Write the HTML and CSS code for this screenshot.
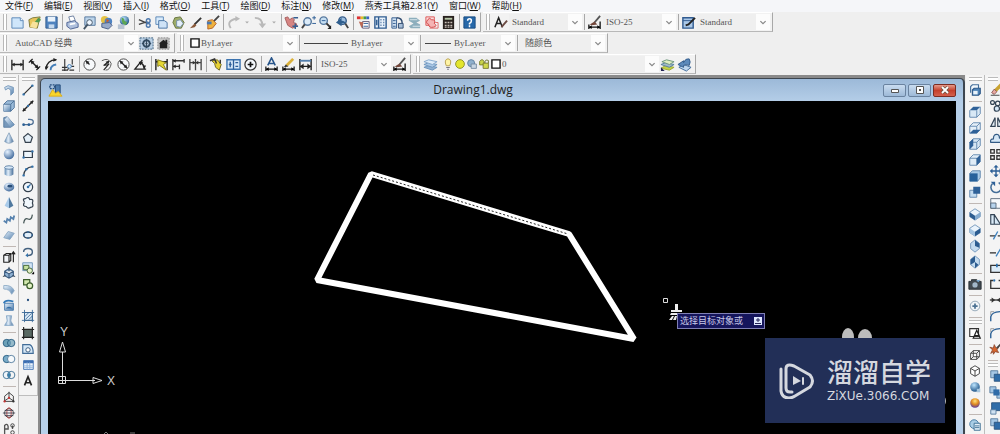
FILE: index.html
```html
<!DOCTYPE html>
<html lang="zh-CN">
<head>
<meta charset="utf-8">
<title>Drawing1.dwg</title>
<link rel="stylesheet" href="styles.css">
</head>
<body>
<svg class="sprite" aria-hidden="true">
<defs>
<linearGradient id="gb" x1="0" y1="0" x2="1" y2="1"><stop offset="0" stop-color="#e8f3fd"/><stop offset="1" stop-color="#5681ad"/></linearGradient>
<linearGradient id="gh" x1="0" y1="0" x2="1" y2="0"><stop offset="0" stop-color="#5f8ab5"/><stop offset=".4" stop-color="#e3effa"/><stop offset="1" stop-color="#49709a"/></linearGradient>
<radialGradient id="gs" cx=".35" cy=".3" r=".75"><stop offset="0" stop-color="#e6f2ff"/><stop offset="1" stop-color="#416a9c"/></radialGradient>
<radialGradient id="gg" cx=".4" cy=".3" r=".7"><stop offset="0" stop-color="#bfe6ff"/><stop offset="1" stop-color="#1d5488"/></radialGradient>
<radialGradient id="go" cx=".5" cy=".3" r=".7"><stop offset="0" stop-color="#ffe27a"/><stop offset=".5" stop-color="#e08a20"/><stop offset="1" stop-color="#5a3aa0"/></radialGradient>
</defs>
<symbol id="new" viewBox="0 0 16 16"><path d="M2 3h9l3 3v8H2z" fill="#cfe6fb" stroke="#5b87b8"/><path d="M11 3v3h3" fill="#fff" stroke="#5b87b8"/></symbol>
<symbol id="open" viewBox="0 0 16 16"><path d="M2 5l4-2 8-1-3 12-8-1z" fill="#e8c55a" stroke="#7d7a3c"/><path d="M7 9l5-6 3 2-5 6z" fill="#4e9a4e"/><path d="M3 13l3-6 6 1-2 6z" fill="#f8e39b"/></symbol>
<symbol id="save" viewBox="0 0 16 16"><path d="M2 2h12v12H2z" fill="#4f83bf" stroke="#315b8e"/><path d="M4 2h8v5H4z" fill="#e9f2fb"/><path d="M5 10h6v4H5z" fill="#c5d9ee"/></symbol>
<symbol id="print" viewBox="0 0 16 16"><path d="M4 2l5-1 2 5-5 2z" fill="#fff" stroke="#6c7fa0"/><path d="M2 8l8-2 4 3v4l-8 2-4-3z" fill="#aebfdc" stroke="#4d6394"/><path d="M5 10l6-1" stroke="#fff" stroke-width="2"/></symbol>
<symbol id="preview" viewBox="0 0 16 16"><path d="M3 2h11v9H3z" fill="#bcd4ea" stroke="#55779f"/><circle cx="8" cy="8" r="3" fill="#eef6ff" stroke="#456"/><path d="M6 10l-4 5" stroke="#456" stroke-width="2"/></symbol>
<symbol id="publish" viewBox="0 0 16 16"><circle cx="6" cy="5" r="4" fill="#e5c243"/><circle cx="10" cy="7" r="4" fill="#4e83c2"/><path d="M3 9l8-1 3 3-4 4-7-2z" fill="#96a9c9" stroke="#4b5f88"/><path d="M8 4l3 2-3 2z" fill="#d05a2a"/></symbol>
<symbol id="globe" viewBox="0 0 16 16"><circle cx="9" cy="6" r="5" fill="url(#gg)"/><path d="M6 3q3 0 3 3l3 2-2 3q-4 0-4-8" fill="#5ca653"/><path d="M2 10h7v5H2z" fill="#b7c3d2"/></symbol>
<symbol id="cut" viewBox="0 0 16 16"><path d="M2 5l9 4M2 10l9-3" stroke="#444" stroke-width="1.5"/><circle cx="12" cy="6" r="2" fill="none" stroke="#4d78ad" stroke-width="1.5"/><circle cx="12" cy="11" r="2" fill="none" stroke="#4d78ad" stroke-width="1.5"/></symbol>
<symbol id="copy" viewBox="0 0 16 16"><path d="M2 2h8v8H2z" fill="#d9ebfb" stroke="#5b87b8"/><path d="M5 6h6l3 2v6H5z" fill="#cfe3f7" stroke="#4a74a3"/></symbol>
<symbol id="paste" viewBox="0 0 16 16"><path d="M4 3l6-1 4 6-3 6-6 0-3-6z" fill="#9dac68" stroke="#66743e"/><path d="M6 6l4-1 3 4-3 4-4-1z" fill="#e4effa" stroke="#7790a8"/></symbol>
<symbol id="brush" viewBox="0 0 16 16"><path d="M14 3l-7 7" stroke="#333" stroke-width="2"/><path d="M7 9l-5 5 5-1 2-2z" fill="#8b5a3a"/></symbol>
<symbol id="match" viewBox="0 0 16 16"><path d="M15 1l-6 6" stroke="#444" stroke-width="2"/><path d="M3 6l5-1 4 4-4 5-5 1z" fill="#eeb13c" stroke="#b5622a"/><path d="M2 7h5v3H2z" fill="#4b78b0"/></symbol>
<symbol id="undo" viewBox="0 0 16 16"><path d="M5 14Q0 6 11 4" fill="none" stroke="#b9b9b9" stroke-width="2"/><path d="M10 1l5 3-5 3z" fill="#b9b9b9"/></symbol>
<symbol id="redo" viewBox="0 0 16 16"><path d="M2 3q8 0 8 8" fill="none" stroke="#b9b9b9" stroke-width="2"/><path d="M6 9h8l-4 5z" fill="#b9b9b9"/></symbol>
<symbol id="dd" viewBox="0 0 8 16"><path d="M2 7h4l-2 2z" fill="#aaa"/></symbol>
<symbol id="pan" viewBox="0 0 16 16"><path d="M1 3l3-1 2 3 3-2 2 2-1 3 3 1 1 3-5 2-5-3z" fill="#d68482" stroke="#a45e5e"/><path d="M9 12h6M12 9v6M10 3h5" stroke="#365f91" stroke-width="1.5"/></symbol>
<symbol id="zoomi" viewBox="0 0 16 16"><circle cx="7" cy="7" r="4" fill="#dcebf8" stroke="#57799f" stroke-width="1.5"/><path d="M4 10l-3 4" stroke="#444" stroke-width="2"/><path d="M12 3h4M14 1v4M12 9h4" stroke="#2d5e95"/></symbol>
<symbol id="zoomw" viewBox="0 0 16 16"><circle cx="6" cy="6" r="4" fill="#c7dff2" stroke="#57799f" stroke-width="1.5"/><path d="M9 9l4 4" stroke="#333" stroke-width="2"/><path d="M4 6h4" stroke="#2d5e95"/><path d="M14 11v4h-4z" fill="#222"/></symbol>
<symbol id="zoomp" viewBox="0 0 16 16"><circle cx="8" cy="6" r="4" fill="#9ebfdf" stroke="#345b89" stroke-width="1.5"/><path d="M11 9l3 5" stroke="#444" stroke-width="2"/><path d="M1 8l6-5v3q4 0 4 3-2-1-4 0v3z" fill="#31608f"/></symbol>
<symbol id="props" viewBox="0 0 16 16"><path d="M1 3h4" stroke="#d33" stroke-width="3"/><path d="M5 3h3" stroke="#e4bc27" stroke-width="3"/><path d="M8 3h3" stroke="#429b46" stroke-width="3"/><path d="M11 3h3" stroke="#3965c2" stroke-width="3"/><path d="M7 7h7v7H7z" fill="#fff" stroke="#635b78"/><path d="M8 9h5M8 12h5" stroke="#31629b"/><path d="M3 7l5 1-2 6z" fill="#bc6955"/></symbol>
<symbol id="dcenter" viewBox="0 0 16 16"><path d="M2 2h12v12H2z" fill="#e9f2fb" stroke="#2f5c91" stroke-width="1.5"/><path d="M6 2v12M4 5v6M8 5h1m2 0h1M8 8h1m2 0h1M8 11h1m2 0h1" stroke="#2f5c91" stroke-width="1.5"/></symbol>
<symbol id="tpal" viewBox="0 0 16 16"><path d="M2 3h5v11H2z" fill="#cfe0f1" stroke="#345c8e"/><path d="M3 6h3M3 9h3M3 12h3" stroke="#345c8e"/><path d="M7 3q6 0 6 6" fill="none" stroke="#304b70" stroke-width="1.5"/><path d="M9 9h5v5H9z" fill="#a6bdd7" stroke="#304b70"/></symbol>
<symbol id="sheet" viewBox="0 0 16 16"><path d="M2 3h8l4 3-4 2 4 2v4H4l-2-2 5-3-5-3z" fill="#8caebd"/><path d="M3 5h8M6 12h8" stroke="#d7e5ec"/></symbol>
<symbol id="markup" viewBox="0 0 16 16"><path d="M2 2h9v9H2z" fill="#fbdede" stroke="#d55"/><path d="M4 5q2-3 4 0 5 0 3 4 4 3-1 4-5 1-5-3-4-1-1-5" fill="#f5b3b3" stroke="#cf4444"/><path d="M12 8h3v6H6" fill="none" stroke="#d66"/></symbol>
<symbol id="calc" viewBox="0 0 16 16"><path d="M2 1h12v14H2z" fill="#29221f"/><path d="M4 3h8v2H4z" fill="#b6c6a7"/><path d="M4 8h2m1 0h2m1 0h2M4 11h2m1 0h2m1 0h2M4 13h2m1 0h2m1 0h2" stroke="#c9bfb8" stroke-width="1.4"/></symbol>
<symbol id="help" viewBox="0 0 16 16"><path d="M2 2h12v12H2z" fill="#2668a9" stroke="#174b81"/><path d="M6 6q0-2 2-2t2 2-2 3v1m0 1v2" fill="none" stroke="#fff" stroke-width="1.6"/></symbol>
<symbol id="tstyle" viewBox="0 0 16 16"><path d="M2 13L6 3l4 10M3 9h5" fill="none" stroke="#222" stroke-width="1.6"/><path d="M15 6l-6 7" stroke="#6b4a42" stroke-width="2"/></symbol>
<symbol id="dstyle" viewBox="0 0 16 16"><path d="M14 1L8 8" stroke="#555" stroke-width="2"/><path d="M3 10l5-3 3 3-6 1z" fill="#73473b"/><path d="M2 10v5M14 7v8M2 13h12" stroke="#111" stroke-width="1.4"/><path d="M2 13l3-2v4zM14 13l-3-2v4z"/></symbol>
<symbol id="tbstyle" viewBox="0 0 16 16"><path d="M2 3h11v11H2z" fill="#aac8e8" stroke="#315b90" stroke-width="1.5"/><path d="M2 6h11" stroke="#315b90"/><path d="M15 3l-7 7-3 1" stroke="#222" stroke-width="2" fill="none"/></symbol>
<symbol id="gear" viewBox="0 0 16 16"><path d="M1 2h14v12H1z" fill="#bad0e5" stroke="#3d607f" stroke-dasharray="2 1"/><circle cx="8" cy="8" r="3.5" fill="none" stroke="#30495f" stroke-width="2"/><circle cx="8" cy="8" r="1"/><path d="M8 3v10M3 8h2m6 0h2" stroke="#30495f"/></symbol>
<symbol id="ws" viewBox="0 0 16 16"><path d="M2 2h12v12H2z" fill="#c6c6c6" stroke="#888" stroke-dasharray="2 1"/><path d="M3 8l5-4 5 4h-1v5H4V8z" fill="#222"/><path d="M11 4v4" stroke="#222" stroke-width="2"/></symbol>
<symbol id="dlin" viewBox="0 0 16 16"><path d="M2 3v11M14 3v11M2 8h12" stroke="#222" stroke-width="1.4"/><path d="M2 8l3-2v4zM14 8l-3-2v4z" fill="#222"/></symbol>
<symbol id="dalg" viewBox="0 0 16 16"><path d="M2 6l4-4M10 14l4-4M4 4l8 8" stroke="#222" stroke-width="1.5"/><path d="M3 3l5 2-3 3zM13 13l-5-2 3-3z" fill="#222"/></symbol>
<symbol id="darc" viewBox="0 0 16 16"><path d="M2 13Q3 3 13 3" fill="none" stroke="#222" stroke-width="1.4"/><path d="M7 14q0-5 6-6" fill="none" stroke="#467fb8" stroke-width="2"/><path d="M14 3l-4-2v4zM2 14l-1-4h4z" fill="#222"/></symbol>
<symbol id="dord" viewBox="0 0 16 16"><path d="M4 2v9M1 11h6M4 11v4M12 2v6M1 14h6l2-4h5M9 14h5" fill="none" stroke="#333" stroke-width="1.200"/><circle cx="9" cy="10" r="2" fill="#dceaf7" stroke="#467fb8"/></symbol>
<symbol id="drad" viewBox="0 0 16 16"><circle cx="8" cy="8" r="6" fill="#f7f9fb" stroke="#444"/><path d="M8 8L4 4" stroke="#222" stroke-width="1.3"/><path d="M4 4l4 1-3 3z" fill="#222"/></symbol>
<symbol id="djog" viewBox="0 0 16 16"><path d="M3 4q7-4 10 3-1 7-6 7" fill="none" stroke="#555"/><path d="M10 5L5 9l5-1-5 6" fill="none" stroke="#222" stroke-width="1.200"/><path d="M11 4l-4 1 3 3z" fill="#222"/></symbol>
<symbol id="ddia" viewBox="0 0 16 16"><circle cx="8" cy="8" r="6" fill="#f7f9fb" stroke="#444"/><path d="M4 4l8 8" stroke="#222" stroke-width="1.3"/><path d="M4 4l4 1-3 3zM12 12l-4-1 3-3z" fill="#222"/></symbol>
<symbol id="dang" viewBox="0 0 16 16"><path d="M14 13H2l8-10M7 6q5 1 5 7" fill="none" stroke="#222" stroke-width="1.4"/><path d="M6 5l5 0-3 4zM12 13l-2-4h4z" fill="#222"/></symbol>
<symbol id="dquick" viewBox="0 0 16 16"><path d="M2 2v12M14 2v12M2 5h12" stroke="#222" stroke-width="1.5"/><path d="M4 3l9 3-3 2 3 6-7-5-2 1z" fill="#e6d833" stroke="#817a1d"/></symbol>
<symbol id="dbase" viewBox="0 0 16 16"><path d="M2 2v12M14 2v4M9 8v5M2 4h12M2 10h7" stroke="#333" stroke-width="1.4"/><path d="M2 4l3-2v4zM2 10l3-2v4z" fill="#222"/></symbol>
<symbol id="dcont" viewBox="0 0 16 16"><path d="M2 2v12M8 2v12M14 2v12M2 6h12" stroke="#444" stroke-width="1.4"/><path d="M8 6l-3-2v4zM8 6l3-2v4z" fill="#333"/></symbol>
<symbol id="dspace" viewBox="0 0 16 16"><path d="M3 4l6-1 4 5-2 6-4-3-1-4z" fill="#e6d033" stroke="#6d6520"/><path d="M1 4l5-2 2 5M12 3v4" fill="none" stroke="#333" stroke-width="1.5"/></symbol>
<symbol id="tol" viewBox="0 0 16 16"><path d="M1 3h14v10H1z" fill="#d8e9f9" stroke="#3d74b0" stroke-width="1.5"/><path d="M8 3v10M3 8h3M4.500 5v6M10 6h3M10 10h3" stroke="#2d5e99" stroke-width="1.4"/></symbol>
<symbol id="cmark" viewBox="0 0 16 16"><circle cx="8" cy="8" r="6" fill="#f4f8fc" stroke="#333" stroke-width="1.3"/><path d="M5 8h6M8 5v6" stroke="#111" stroke-width="1.8"/></symbol>
<symbol id="dedit" viewBox="0 0 16 16"><path d="M4 9l4-8 4 8M5 7h6" fill="none" stroke="#28558a" stroke-width="1.7"/><path d="M2 10v5M14 10v5M2 13h12" stroke="#111" stroke-width="1.3"/><path d="M2 13l3-2v4zM14 13l-3-2v4z"/></symbol>
<symbol id="dtedit" viewBox="0 0 16 16"><path d="M13 2L6 9" stroke="#dbb13b" stroke-width="3"/><path d="M3 11l2-3 3 2z" fill="#333"/><path d="M2 10v5M14 10v5M2 13h12" stroke="#111" stroke-width="1.3"/><path d="M2 13l3-2v4zM14 13l-3-2v4z"/></symbol>
<symbol id="dupd" viewBox="0 0 16 16"><path d="M2 2v12M14 2v12M2 10h12" stroke="#222" stroke-width="1.5"/><path d="M2 4h12" stroke="#5580ae" stroke-width="2"/><path d="M2 10l4-3v6zM14 10l-4-3v6z" fill="#222"/></symbol>
<symbol id="layers" viewBox="0 0 16 16"><path d="M1 11l5-2 9 2-5 3z" fill="#8fb0d2" stroke="#6d94bd"/><path d="M1 8l5-2 9 2-5 3z" fill="#aac8e5" stroke="#6d94bd"/><path d="M1 5l5-2 9 2-5 3z" fill="#dfedfa" stroke="#84a8cc"/></symbol>
<symbol id="lprev" viewBox="0 0 16 16"><path d="M1 12l5-3 9 2-5 3z" fill="#c3d244" stroke="#9da838"/><path d="M1 8l5-2 9 2-5 3z" fill="#a0b9c9" stroke="#557f9e"/><path d="M2 5l5-2 8 2-5 3z" fill="#dfeec3" stroke="#6c957d"/><path d="M1 15v-4l4 4z" fill="#225"/></symbol>
<symbol id="lback" viewBox="0 0 16 16"><path d="M2 11l5-3 8 3-5 4z" fill="#bdd6ee" stroke="#3f6b9b"/><path d="M1 8l6-4v2q2-5 6-4 2 3 0 7-3-2-6 0v2z" fill="#5c8abb" stroke="#315b8b"/></symbol>
<symbol id="bulb" viewBox="0 0 12 16"><path d="M4 10Q1 3 6 2q5 1 2 8z" fill="#fff4a5" stroke="#b49a45"/><path d="M4 12h4M5 14h2" stroke="#667"/></symbol>
<symbol id="sun" viewBox="0 0 12 16"><circle cx="6" cy="8" r="5" fill="#e3e52d" stroke="#868a22"/></symbol>
<symbol id="vp" viewBox="0 0 12 16"><circle cx="5" cy="7" r="4" fill="#8fb0cd" stroke="#597b9d"/><path d="M5 8h6v5H5z" fill="#c7d6e3" stroke="#70889f"/></symbol>
<symbol id="lock" viewBox="0 0 12 16"><path d="M1 5q3-4 5 0v4H1z" fill="#c9d34b" stroke="#757d2b"/><path d="M5 7h6v6H5z" fill="#d2d94c" stroke="#75772b"/><path d="M7 7q0-5 4-3v3" fill="none" stroke="#626622"/></symbol>
<symbol id="sq" viewBox="0 0 10 12"><path d="M1.500 2.500h7v7h-7z" fill="#fff" stroke="#111" stroke-width="1.200"/></symbol>
<symbol id="polysolid" viewBox="0 0 16 16"><path d="M3 5l4-2 6 2v6l-3 3V8L7 6 4 8z" fill="url(#gb)" stroke="#7094b8"/></symbol>
<symbol id="box" viewBox="0 0 16 16"><path d="M2 6l4-4h8v8l-4 4H2z" fill="#9bbbd9" stroke="#4a6e95"/><path d="M2 6h8v8H2z" fill="url(#gb)"/><path d="M2 6h8v8M10 6l4-4" fill="none" stroke="#4a6e95"/></symbol>
<symbol id="wedge" viewBox="0 0 16 16"><path d="M2 3l4-1 8 9-4 3H2z" fill="#7798ba" stroke="#587ca1"/><path d="M6 2l8 9-4 3-7-9z" fill="url(#gb)"/></symbol>
<symbol id="cone" viewBox="0 0 16 16"><path d="M8 2l5 10q-5 4-10 0z" fill="url(#gh)" stroke="#7895b2" stroke-width=".8"/></symbol>
<symbol id="sphere" viewBox="0 0 16 16"><circle cx="8" cy="8" r="6" fill="url(#gs)"/></symbol>
<symbol id="cyl" viewBox="0 0 16 16"><path d="M3 4v8q5 4 10 0V4z" fill="url(#gh)"/><ellipse cx="8" cy="4" rx="5" ry="2" fill="#d8e8f7" stroke="#587ca1"/></symbol>
<symbol id="torus" viewBox="0 0 16 16"><ellipse cx="8" cy="8" rx="6" ry="5" fill="url(#gs)"/><ellipse cx="9" cy="7" rx="3" ry="1.600" fill="#274d78"/></symbol>
<symbol id="pyr" viewBox="0 0 16 16"><path d="M8 1l5 10-5 3z" fill="#50799f"/><path d="M8 1L3 11l5 3z" fill="#a9cbea"/></symbol>
<symbol id="helix" viewBox="0 0 16 16"><path d="M2 10l3 2 1-4 3 2 1-4 3 2 1-4" fill="none" stroke="#5782ae" stroke-width="2"/></symbol>
<symbol id="plane" viewBox="0 0 16 16"><path d="M2 11l5-7 7 2-5 7z" fill="url(#gb)" stroke="#88a6c2"/></symbol>
<symbol id="extr" viewBox="0 0 16 16"><path d="M2 6l3-2h5v8l-2 2H2zM2 6h6v8M8 6l2-2" fill="#f2f5f8" stroke="#222" stroke-width="1.3"/><path d="M13 14V3M11 5l2-3 2 3" fill="none" stroke="#222" stroke-width="1.3"/></symbol>
<symbol id="press" viewBox="0 0 16 16"><path d="M3 6l5-3 5 3v5l-5 3-5-3zM3 6l5 3 5-3M8 9v5" fill="#8db0d2" stroke="#3c5c80" stroke-width="1.200"/><path d="M8 1v5M1 12l3-1M15 12l-3-1" stroke="#234"/></symbol>
<symbol id="sweep" viewBox="0 0 16 16"><path d="M2 4q9-1 12 6l-3 4Q9 8 2 8z" fill="url(#gb)" stroke="#8eabc6"/></symbol>
<symbol id="revolve" viewBox="0 0 16 16"><path d="M3 6h10v8H3z" fill="url(#gb)" stroke="#3f75aa"/><path d="M2 6q2-5 11-2" fill="none" stroke="#3479b8" stroke-width="2"/><path d="M4 12q4-4 8 0" fill="#2f6ca8"/></symbol>
<symbol id="loft" viewBox="0 0 16 16"><path d="M5 2h6l-1 6 3 5H3l3-5z" fill="url(#gh)" stroke="#87a8c7"/></symbol>
<symbol id="union" viewBox="0 0 16 16"><circle cx="5.500" cy="8" r="4.200" fill="#6ca1b8" stroke="#265c80"/><circle cx="10.500" cy="8" r="4.200" fill="#6ca1b8" fill-opacity=".7" stroke="#265c80"/></symbol>
<symbol id="subtr" viewBox="0 0 16 16"><circle cx="5.500" cy="8" r="4.200" fill="#79acc9" stroke="#265c80"/><circle cx="10.500" cy="8" r="4.200" fill="#f7fafc" stroke="#50799b"/></symbol>
<symbol id="inter" viewBox="0 0 16 16"><circle cx="5.500" cy="8" r="4.200" fill="#eff5fa" stroke="#386b91"/><circle cx="10.500" cy="8" r="4.200" fill="none" stroke="#386b91"/><path d="M8 5q3 3 0 6-3-3 0-6" fill="#367fac"/></symbol>
<symbol id="ucs" viewBox="0 0 16 16"><path d="M8 9V2M8 9l-6 4M8 9l6 4M3 7l5-4 5 4v6H3z" fill="none" stroke="#333"/><circle cx="8" cy="9" r="1.300" fill="#c33"/><circle cx="3" cy="13" r="1.300" fill="#c33"/><circle cx="13" cy="13" r="1.300" fill="#333"/></symbol>
<symbol id="orbit" viewBox="0 0 16 16"><circle cx="8" cy="8" r="5" fill="none" stroke="#333"/><ellipse cx="8" cy="8" rx="2.500" ry="6" fill="none" stroke="#b44"/><path d="M1 8h14M3 5h10M3 11h10" stroke="#445"/></symbol>
<symbol id="steps" viewBox="0 0 16 16"><path d="M3 14V4q3-3 4 1v3H3M12 4v4" fill="none" stroke="#555" stroke-width="1.500"/><circle cx="12" cy="4" r="2" fill="none" stroke="#333"/><circle cx="12" cy="12" r="2" fill="none" stroke="#333"/></symbol>
<symbol id="line" viewBox="0 0 16 16"><path d="M3 13L13 3" stroke="#333" stroke-width="1.400"/><circle cx="3" cy="13" r="1.400" fill="#3472aa"/><circle cx="13" cy="3" r="1.400" fill="#3472aa"/></symbol>
<symbol id="xline" viewBox="0 0 16 16"><path d="M2 14L14 2" stroke="#222" stroke-width="1.600"/><path d="M2 14l1-4 3 3zM14 2l-1 4-3-3z" fill="#222"/><circle cx="8" cy="8" r="1.300" fill="#3472aa"/></symbol>
<symbol id="pline" viewBox="0 0 16 16"><path d="M2 11h8q4 0 4-3t-4-3H8" fill="none" stroke="#4c6e94" stroke-width="1.500"/><circle cx="3" cy="11" r="1.500" fill="#2a5f95"/><circle cx="9" cy="11" r="1.500" fill="#2a5f95"/></symbol>
<symbol id="polyg" viewBox="0 0 16 16"><path d="M8 3l5 4-2 6H5L3 7z" fill="#e4eff8" stroke="#34404d" stroke-width="1.400"/></symbol>
<symbol id="rect" viewBox="0 0 16 16"><path d="M3 5h10v7H3z" fill="#edf5fb" stroke="#34404d" stroke-width="1.400"/><circle cx="3" cy="12" r="1.400" fill="#3472aa"/><circle cx="13" cy="5" r="1.400" fill="#3472aa"/></symbol>
<symbol id="arc" viewBox="0 0 16 16"><path d="M3 13Q4 4 13 3" fill="none" stroke="#34404d" stroke-width="1.400"/><circle cx="3" cy="13" r="1.400" fill="#3472aa"/><circle cx="6" cy="6" r="1.400" fill="#3472aa"/><circle cx="13" cy="3" r="1.400" fill="#3472aa"/></symbol>
<symbol id="circ" viewBox="0 0 16 16"><circle cx="8" cy="8" r="5.300" fill="#f1f7fc" stroke="#34404d" stroke-width="1.400"/><path d="M8 8l3-3" stroke="#3472aa" stroke-width="1.400"/><circle cx="8" cy="8" r="1.400" fill="#3472aa"/></symbol>
<symbol id="cloud" viewBox="0 0 16 16"><path d="M4 7q-3-4 1-4 4-3 5 1 5-1 3 4 2 5-2 5-3 2-5-1-5 0-2-5" fill="#f1f7fc" stroke="#34404d" stroke-width="1.400"/></symbol>
<symbol id="spline" viewBox="0 0 16 16"><path d="M3 13q1-7 5-5t5-5" fill="none" stroke="#455" stroke-width="1.400"/></symbol>
<symbol id="ell" viewBox="0 0 16 16"><ellipse cx="8" cy="8" rx="5" ry="3.500" fill="#e1eef9" stroke="#2c4660" stroke-width="1.600"/><path d="M3 8h1M12 8h1M8 4v1M8 11v1" stroke="#2769a9" stroke-width="2"/></symbol>
<symbol id="ellarc" viewBox="0 0 16 16"><path d="M3 8q0-4 5-4t5 4-5 4" fill="none" stroke="#44617f" stroke-width="1.600"/><path d="M8 9l-3 3 3 2z" fill="#3472aa"/></symbol>
<symbol id="insb" viewBox="0 0 16 16"><path d="M2 2h11v9H2z" fill="#d3e5f5" stroke="#6a91b6"/><path d="M3 5h6v5H3z" fill="#c6e2a0" stroke="#3b5d2b"/><circle cx="10" cy="11" r="3" fill="#e4f0c8" stroke="#3b5d2b"/><path d="M15 12v3h-3z"/></symbol>
<symbol id="mkb" viewBox="0 0 16 16"><path d="M3 3h7v6H3z" fill="#d3e9ae" stroke="#3b5d2b" stroke-width="1.400"/><circle cx="10" cy="10" r="3.300" fill="#e4f3c8" stroke="#3b5d2b" stroke-width="1.400"/></symbol>
<symbol id="pt" viewBox="0 0 16 16"><circle cx="8" cy="8" r="1.300" fill="#244e7d"/></symbol>
<symbol id="hatch" viewBox="0 0 16 16"><path d="M4 4h9v9H4z" fill="#dcebf8" stroke="#34506d"/><path d="M1 4h14M4 1v14M13 1v14M1 13h14M4 9l5-5M5 12l7-7M9 12l4-4" stroke="#3b6a99"/></symbol>
<symbol id="grad" viewBox="0 0 16 16"><path d="M3 3h10v10H3z" fill="#596963"/><path d="M1 4h14M3 1v14M13 1v14M1 13h14" stroke="#222" stroke-width="1.300"/></symbol>
<symbol id="region" viewBox="0 0 16 16"><path d="M2 3h8q4 2 4 10H2z" fill="#d5e7f6" stroke="#416c98" stroke-width="1.300"/><circle cx="8" cy="9" r="2.500" fill="#fff" stroke="#294e76"/></symbol>
<symbol id="table" viewBox="0 0 16 16"><path d="M3 3h11v10H3z" fill="#eef5fd" stroke="#3c6eb1"/><path d="M3 4.500h11" stroke="#3c6eb1" stroke-width="3"/><path d="M3 9h11M3 11h11M7 5v8M10 5v8" stroke="#8fb2dc"/></symbol>
<symbol id="mtext" viewBox="0 0 16 16"><path d="M4 13L8 3l4 10M5 10h6" fill="none" stroke="#222" stroke-width="1.900"/></symbol>
<symbol id="views" viewBox="0 0 16 16"><path d="M3 11V4l2-2h7v4" fill="#f3f8fc" stroke="#456f9a" stroke-width="1.300"/><path d="M5 8l2-2h7v6l-2 2H5z" fill="#4f84b8" stroke="#2d5888" stroke-width="1.300"/><path d="M6 9h5v4H6z" fill="#e8f2fa"/></symbol>
<symbol id="vtop" viewBox="0 0 16 16"><path d="M2 6v8h8l4-4V2" fill="#d8e8f5" stroke="#5c84ab"/><path d="M2 6l4-4h8l-4 4z" fill="#2f6198"/><path d="M10 6v8" stroke="#5c84ab"/></symbol>
<symbol id="vbot" viewBox="0 0 16 16"><path d="M2 6l4-4h8v8l-4 4H2zM2 6h8v8M10 6l4-4" fill="#e4eff8" stroke="#5c84ab"/><path d="M2 14l4-4h8l-4 4z" fill="#2f6198"/></symbol>
<symbol id="vleft" viewBox="0 0 16 16"><path d="M2 6l4-4h8v8l-4 4H2zM2 6h8v8M10 6l4-4" fill="#d6e6f4" stroke="#5c84ab"/><path d="M2 6l4-4v8l-4 4z" fill="#2f6198"/></symbol>
<symbol id="vright" viewBox="0 0 16 16"><path d="M2 6l4-4h8v8l-4 4H2zM2 6h8v8" fill="#dfecf7" stroke="#5c84ab"/><path d="M10 6l4-4v8l-4 4z" fill="#2f6198"/></symbol>
<symbol id="vfront" viewBox="0 0 16 16"><path d="M2 5l3-3h9v8l-3 4H2z" fill="#a9cae6" stroke="#5c84ab"/><path d="M2 5h9v9H2z" fill="#27619b"/></symbol>
<symbol id="vback" viewBox="0 0 16 16"><path d="M2 6h8v8H2z" fill="#c4dcf0" stroke="#5c84ab"/><path d="M6 2h8v8H6z" fill="#2f6198"/></symbol>
<symbol id="iso1" viewBox="0 0 16 16"><path d="M8 2l6 4v5l-6 4-6-4V6z" fill="#eaf3fb" stroke="#6f94b8"/><path d="M2 6l6 4v5l-6-4z" fill="#2c5c90"/><path d="M14 6l-6 4v5l6-4z" fill="#83aacf"/></symbol>
<symbol id="iso2" viewBox="0 0 16 16"><path d="M8 2l6 4v5l-6 4-6-4V6z" fill="#eaf3fb" stroke="#6f94b8"/><path d="M14 6l-6 4v5l6-4z" fill="#2c5c90"/><path d="M2 6l6 4v5l-6-4z" fill="#a3c4e2"/></symbol>
<symbol id="iso3" viewBox="0 0 16 16"><path d="M8 1l5 4v6l-5 4-5-4V5z" fill="#c5dcf0" stroke="#6f94b8"/><path d="M8 1l5 4v5L8 8z" fill="#2c5c90"/></symbol>
<symbol id="iso4" viewBox="0 0 16 16"><path d="M8 1l5 4v6l-5 4-5-4V5z" fill="#c5dcf0" stroke="#6f94b8"/><path d="M8 1L3 5v6l5-3zM8 8l4 3-4 4z" fill="#2c5c90"/></symbol>
<symbol id="cam" viewBox="0 0 16 16"><path d="M1 5h3V3h6v2h5v9H1z" fill="#414b52" stroke="#242a30"/><circle cx="8" cy="9" r="3" fill="#a2b8ca"/><path d="M9 4l5-1-2 3z" fill="#72a6d1"/></symbol>
<symbol id="wheel" viewBox="0 0 16 16"><circle cx="8" cy="8" r="5.500" fill="#f0f4f7" stroke="#8ba0b1"/><path d="M5 8h6M8 5v6" stroke="#4c7293" stroke-width="2"/></symbol>
<symbol id="wf2" viewBox="0 0 16 16"><path d="M2 3h10v9H2z" fill="#fff" stroke="#333" stroke-width="1.300"/><path d="M6 14l4-9 4 9zM8 11h4" fill="none" stroke="#222" stroke-width="1.400"/></symbol>
<symbol id="wf3" viewBox="0 0 16 16"><path d="M3 6l3-3h7v7l-3 3H3zM3 6h7v7M10 6l3-3M3 13l3-3h7M6 3v7" fill="#fff" stroke="#333"/></symbol>
<symbol id="hid" viewBox="0 0 16 16"><path d="M8 2l5 3v6l-5 3-5-3V5zM3 5l5 3 5-3M8 8v6" fill="#fff" stroke="#333"/></symbol>
<symbol id="real" viewBox="0 0 16 16"><circle cx="8" cy="8" r="5.500" fill="url(#gg)"/><path d="M10 10h4v4h-4z" fill="#a6c6de"/></symbol>
<symbol id="conc" viewBox="0 0 16 16"><circle cx="8" cy="8" r="5.500" fill="url(#go)"/></symbol>
<symbol id="vsm" viewBox="0 0 16 16"><circle cx="7" cy="7" r="5" fill="#a9cde5" stroke="#3e759e"/><path d="M7 6h7v8H7z" fill="#e5f1fa" stroke="#35698f"/><path d="M8 9h5M8 11h5" stroke="#35698f"/></symbol>
<symbol id="erase" viewBox="0 0 16 16"><path d="M14 2L7 9" stroke="#c9a331" stroke-width="4"/><path d="M3 11l3-4 3 3-3 3z" fill="#e8a8a0" stroke="#855"/><path d="M2 14h10" stroke="#333"/></symbol>
<symbol id="copyo" viewBox="0 0 16 16"><circle cx="4" cy="4" r="2.200" fill="none" stroke="#345" stroke-width="1.400"/><circle cx="10" cy="5" r="2.600" fill="none" stroke="#345" stroke-width="1.400"/><circle cx="9" cy="11" r="3" fill="#d7e8f7" stroke="#345" stroke-width="1.400"/></symbol>
<symbol id="mirror" viewBox="0 0 16 16"><path d="M7 3v10H2zM10 3v10h5z" fill="#e7f0f8" stroke="#345" stroke-width="1.300"/></symbol>
<symbol id="offset" viewBox="0 0 16 16"><path d="M2 13q-1-4 3-4 0-6 5-5 2 1 2 4 3 1 3 5z" fill="#d5e7f6" stroke="#345b84" stroke-width="1.400"/></symbol>
<symbol id="array" viewBox="0 0 16 16"><path d="M2 3h4v4H2zM9 3h4v4H9zM2 10h4v4H2zM9 10h4v4H9z" fill="#fff" stroke="#333" stroke-width="1.500"/></symbol>
<symbol id="move" viewBox="0 0 16 16"><path d="M2 8h12M8 2v12" stroke="#2c5f96" stroke-width="1.600"/><path d="M8 1l3 3H5zM8 15l3-3H5zM1 8l3-3v6zM15 8l-3-3v6z" fill="#2c5f96"/></symbol>
<symbol id="rot" viewBox="0 0 16 16"><path d="M4 4a6 6 0 1 0 7-1" fill="none" stroke="#456f99" stroke-width="1.800"/><path d="M2 2h5v5z" fill="#2c5f96"/></symbol>
<symbol id="scale" viewBox="0 0 16 16"><path d="M2 3h12v11H2z" fill="#f6f9fb" stroke="#567"/><path d="M2 8h6v6H2z" fill="#b7d4ed" stroke="#567"/></symbol>
<symbol id="stretch" viewBox="0 0 16 16"><path d="M2 3h4v11H2zM6 3l7 11H6" fill="#d9e9f6" stroke="#345" stroke-width="1.300"/></symbol>
<symbol id="trim" viewBox="0 0 16 16"><path d="M1 9h6M10 9h5" stroke="#333" stroke-width="1.500"/><path d="M5 13l5-9" stroke="#3d80bd" stroke-width="1.500"/></symbol>
<symbol id="extend" viewBox="0 0 16 16"><path d="M1 9h7" stroke="#333" stroke-width="1.500"/><path d="M8 13l6-10" stroke="#3d80bd" stroke-width="1.500"/></symbol>
<symbol id="brk" viewBox="0 0 16 16"><path d="M2 5h12v8H2z" fill="#dcebf7" stroke="#333" stroke-width="1.500"/><path d="M9 3v4" stroke="#2d72b0" stroke-width="2"/></symbol>
<symbol id="brk2" viewBox="0 0 16 16"><path d="M5 4H2v9h12V4h-3" fill="none" stroke="#333" stroke-width="1.500"/><circle cx="6" cy="4" r="1.300" fill="#2d72b0"/></symbol>
<symbol id="join" viewBox="0 0 16 16"><path d="M1 8h14" stroke="#333" stroke-width="1.500"/><path d="M7 8L3 5v6zM9 8l4-3v6z" fill="#333"/></symbol>
<symbol id="fil" viewBox="0 0 16 16"><path d="M2 14V9q1-6 12-6" fill="none" stroke="#2d6297" stroke-width="1.600"/><path d="M2 3h4M2 3v4" stroke="#999"/></symbol>
<symbol id="expl" viewBox="0 0 16 16"><path d="M2 13l2-4-3-3 4 1 1-4 2 4 3-1-2 3 2 3-4-1-2 3v-3z" fill="#d8642b" stroke="#8d4a32"/><path d="M9 7l5-5" stroke="#444" stroke-width="2"/></symbol>
<symbol id="ord1" viewBox="0 0 16 16"><path d="M2 2h8v8H2z" fill="#a6c7e4" stroke="#55799d"/><path d="M6 6h8v8H6z" fill="#2f6ca8" stroke="#2a517b"/></symbol>
<symbol id="ord2" viewBox="0 0 16 16"><path d="M1 2h7v7H1zM9 9h6v6H9z" fill="#a6c7e4" stroke="#55799d"/><path d="M5 5h7v7H5z" fill="#2f6ca8"/></symbol>
<symbol id="ord3" viewBox="0 0 16 16"><path d="M3 2h12v9H3z" fill="#2f6ca8" stroke="#2a517b"/><path d="M2 10h6v5H2z" fill="#cfe1f1" stroke="#55799d"/></symbol>
<symbol id="chev" viewBox="0 0 16 16"><path d="M5 7l3 3 3-3" fill="none" stroke="#888" stroke-width="1.400"/></symbol>
<symbol id="dwg" viewBox="0 0 16 16"><path d="M2 2h5v4H2z" fill="none" stroke="#264e7c" stroke-width="1.500" stroke-dasharray="2 1"/><path d="M8 2h5v9H8z" fill="#4c7aaa" stroke="#264e7c"/><path d="M1 14l4-7 3 4 3-2 4 5z" fill="#f8d52a" stroke="#d8ab20"/></symbol>
</svg>

<nav class="menu" aria-label="菜单">
<button>文件(<u>F</u>)</button><button>编辑(<u>E</u>)</button><button>视图(<u>V</u>)</button><button>插入(<u>I</u>)</button><button>格式(<u>O</u>)</button><button>工具(<u>T</u>)</button><button>绘图(<u>D</u>)</button><button>标注(<u>N</u>)</button><button>修改(<u>M</u>)</button><button>燕秀工具箱2.81(<u>Y</u>)</button><button>窗口(<u>W</u>)</button><button>帮助(<u>H</u>)</button>
</nav>

<div class="row">
<div class="bar">
<i class="grip"></i>
<button aria-label="新建"><svg><use href="#new"/></svg></button><button aria-label="打开"><svg><use href="#open"/></svg></button><button aria-label="保存"><svg><use href="#save"/></svg></button>
<i class="sep"></i>
<button aria-label="打印"><svg><use href="#print"/></svg></button><button aria-label="打印预览"><svg><use href="#preview"/></svg></button><button aria-label="发布"><svg><use href="#publish"/></svg></button><button aria-label="三维DWF"><svg><use href="#globe"/></svg></button>
<i class="sep"></i>
<button aria-label="剪切"><svg><use href="#cut"/></svg></button><button aria-label="复制"><svg><use href="#copy"/></svg></button><button aria-label="粘贴"><svg><use href="#paste"/></svg></button><button aria-label="特性匹配"><svg><use href="#brush"/></svg></button><button aria-label="块编辑器"><svg><use href="#match"/></svg></button>
<i class="sep"></i>
<button aria-label="放弃"><svg><use href="#undo"/></svg></button><button class="slim" aria-label="放弃列表"><svg><use href="#dd"/></svg></button><button aria-label="重做"><svg><use href="#redo"/></svg></button><button class="slim" aria-label="重做列表"><svg><use href="#dd"/></svg></button>
<i class="sep"></i>
<button aria-label="平移"><svg><use href="#pan"/></svg></button><button aria-label="实时缩放"><svg><use href="#zoomi"/></svg></button><button aria-label="窗口缩放"><svg><use href="#zoomw"/></svg></button><button aria-label="缩放上一个"><svg><use href="#zoomp"/></svg></button>
<i class="sep"></i>
<button aria-label="特性"><svg><use href="#props"/></svg></button><button aria-label="设计中心"><svg><use href="#dcenter"/></svg></button><button aria-label="工具选项板"><svg><use href="#tpal"/></svg></button><button aria-label="图纸集"><svg><use href="#sheet"/></svg></button><button aria-label="标记集"><svg><use href="#markup"/></svg></button><button aria-label="计算器"><svg><use href="#calc"/></svg></button>
<i class="sep"></i>
<button aria-label="帮助"><svg><use href="#help"/></svg></button>
</div>
<div class="bar">
<i class="grip"></i>
<button aria-label="文字样式"><svg><use href="#tstyle"/></svg></button>
<label class="combo w72"><select aria-label="文字样式列表"><option>Standard</option></select><svg class="chev"><use href="#chev"/></svg></label>
<i class="sep"></i>
<button aria-label="标注样式"><svg><use href="#dstyle"/></svg></button>
<label class="combo w72"><select aria-label="标注样式列表"><option>ISO-25</option></select><svg class="chev"><use href="#chev"/></svg></label>
<i class="sep"></i>
<button aria-label="表格样式"><svg><use href="#tbstyle"/></svg></button>
<label class="combo w72"><select aria-label="表格样式列表"><option>Standard</option></select><svg class="chev"><use href="#chev"/></svg></label>
</div>
</div>

<div class="row">
<div class="bar">
<i class="grip"></i>
<label class="combo w128"><select aria-label="工作空间"><option>AutoCAD 经典</option></select><svg class="chev"><use href="#chev"/></svg></label>
<button aria-label="工作空间设置"><svg><use href="#gear"/></svg></button><button aria-label="我的工作空间"><svg><use href="#ws"/></svg></button>
</div>
<div class="bar">
<i class="grip"></i>
<label class="combo w110"><svg class="mini"><use href="#sq"/></svg><select aria-label="颜色"><option>ByLayer</option></select><svg class="chev"><use href="#chev"/></svg></label>
<i class="sep"></i>
<label class="combo w116"><i class="rule"></i><select aria-label="线型"><option>ByLayer</option></select><svg class="chev"><use href="#chev"/></svg></label>
<i class="sep"></i>
<label class="combo w92"><i class="rule short"></i><select aria-label="线宽"><option>ByLayer</option></select><svg class="chev"><use href="#chev"/></svg></label>
<i class="sep"></i>
<label class="combo w86"><select aria-label="打印样式"><option>随颜色</option></select><svg class="chev"><use href="#chev"/></svg></label>
</div>
</div>

<div class="row">
<div class="bar">
<i class="grip"></i>
<button aria-label="线性"><svg><use href="#dlin"/></svg></button><button aria-label="对齐"><svg><use href="#dalg"/></svg></button><button aria-label="弧长"><svg><use href="#darc"/></svg></button><button aria-label="坐标"><svg><use href="#dord"/></svg></button>
<i class="sep"></i>
<button aria-label="半径"><svg><use href="#drad"/></svg></button><button aria-label="折弯"><svg><use href="#djog"/></svg></button><button aria-label="直径"><svg><use href="#ddia"/></svg></button><button aria-label="角度"><svg><use href="#dang"/></svg></button>
<i class="sep"></i>
<button aria-label="快速标注"><svg><use href="#dquick"/></svg></button><button aria-label="基线"><svg><use href="#dbase"/></svg></button><button aria-label="连续"><svg><use href="#dcont"/></svg></button>
<i class="sep"></i>
<button aria-label="等距标注"><svg><use href="#dspace"/></svg></button><button aria-label="公差"><svg><use href="#tol"/></svg></button><button aria-label="圆心标记"><svg><use href="#cmark"/></svg></button>
<i class="sep"></i>
<button aria-label="编辑标注"><svg><use href="#dedit"/></svg></button><button aria-label="编辑标注文字"><svg><use href="#dtedit"/></svg></button><button aria-label="标注更新"><svg><use href="#dupd"/></svg></button>
<i class="sep"></i>
<label class="combo w72"><select aria-label="当前标注样式"><option>ISO-25</option></select><svg class="chev"><use href="#chev"/></svg></label>
<button aria-label="标注样式管理"><svg><use href="#dstyle"/></svg></button>
</div>
<div class="bar">
<i class="grip"></i>
<button aria-label="图层特性"><svg><use href="#layers"/></svg></button>
<label class="combo w220"><svg class="mini"><use href="#bulb"/></svg><svg class="mini"><use href="#sun"/></svg><svg class="mini"><use href="#vp"/></svg><svg class="mini"><use href="#lock"/></svg><svg class="mini"><use href="#sq"/></svg><select aria-label="图层"><option>0</option></select><svg class="chev"><use href="#chev"/></svg></label>
<button aria-label="置为当前"><svg><use href="#lprev"/></svg></button><button aria-label="上一个图层"><svg><use href="#lback"/></svg></button>
</div>
</div>

<main class="work">
<aside class="col">
<i class="grip"></i>
<div class="set"><button aria-label="多段体"><svg><use href="#polysolid"/></svg></button><button aria-label="长方体"><svg><use href="#box"/></svg></button><button aria-label="楔体"><svg><use href="#wedge"/></svg></button><button aria-label="圆锥体"><svg><use href="#cone"/></svg></button><button aria-label="球体"><svg><use href="#sphere"/></svg></button></div>
<div class="set"><button aria-label="圆柱体"><svg><use href="#cyl"/></svg></button><button aria-label="圆环体"><svg><use href="#torus"/></svg></button><button aria-label="棱锥体"><svg><use href="#pyr"/></svg></button><button aria-label="螺旋"><svg><use href="#helix"/></svg></button><button aria-label="平面曲面"><svg><use href="#plane"/></svg></button></div>
<i class="sep"></i>
<div class="set"><button aria-label="拉伸"><svg><use href="#extr"/></svg></button><button aria-label="按住并拖动"><svg><use href="#press"/></svg></button><button aria-label="扫掠"><svg><use href="#sweep"/></svg></button><button aria-label="旋转"><svg><use href="#revolve"/></svg></button><button aria-label="放样"><svg><use href="#loft"/></svg></button></div>
<i class="sep"></i>
<div class="set"><button aria-label="并集"><svg><use href="#union"/></svg></button><button aria-label="差集"><svg><use href="#subtr"/></svg></button><button aria-label="交集"><svg><use href="#inter"/></svg></button></div>
<i class="sep"></i>
<div class="set"><button aria-label="三维移动"><svg><use href="#ucs"/></svg></button><button aria-label="三维旋转"><svg><use href="#orbit"/></svg></button><button aria-label="三维对齐"><svg><use href="#steps"/></svg></button></div>
</aside>
<aside class="col ends">
<i class="grip"></i>
<div class="set"><button aria-label="直线"><svg><use href="#line"/></svg></button><button aria-label="构造线"><svg><use href="#xline"/></svg></button><button aria-label="多段线"><svg><use href="#pline"/></svg></button><button aria-label="正多边形"><svg><use href="#polyg"/></svg></button><button aria-label="矩形"><svg><use href="#rect"/></svg></button></div>
<div class="set"><button aria-label="圆弧"><svg><use href="#arc"/></svg></button><button aria-label="圆"><svg><use href="#circ"/></svg></button><button aria-label="修订云线"><svg><use href="#cloud"/></svg></button><button aria-label="样条曲线"><svg><use href="#spline"/></svg></button><button aria-label="椭圆"><svg><use href="#ell"/></svg></button></div>
<div class="set"><button aria-label="椭圆弧"><svg><use href="#ellarc"/></svg></button><button aria-label="插入块"><svg><use href="#insb"/></svg></button><button aria-label="创建块"><svg><use href="#mkb"/></svg></button><button aria-label="点"><svg><use href="#pt"/></svg></button><button aria-label="图案填充"><svg><use href="#hatch"/></svg></button></div>
<div class="set"><button aria-label="渐变色"><svg><use href="#grad"/></svg></button><button aria-label="面域"><svg><use href="#region"/></svg></button><button aria-label="表格"><svg><use href="#table"/></svg></button><button aria-label="多行文字"><svg><use href="#mtext"/></svg></button></div>
</aside>

<section class="mdi">
<div class="window">
<header class="title">
<svg class="app"><use href="#dwg"/></svg>
<h1>Drawing1.dwg</h1>
<button class="wb" aria-label="最小化"><svg viewBox="0 0 10 8"><path d="M1.500 3.500h7v3h-7z" fill="#fff" stroke="#555"/></svg></button>
<button class="wb" aria-label="还原"><svg viewBox="0 0 10 8"><path d="M1.500 .500h7v7h-7z" fill="#fff" stroke="#555"/><path d="M4 3h2v2H4z" fill="#555"/></svg></button>
<button class="wb close" aria-label="关闭"><svg viewBox="0 0 10 8"><path d="M2 1l6 6M8 1L2 7" stroke="#654" stroke-width="3.200"/><path d="M2 1l6 6M8 1L2 7" stroke="#fff" stroke-width="1.800"/></svg></button>
</header>
<div class="canvas">
<svg class="draw" aria-hidden="true">
<g fill="none" stroke="#fff" stroke-width="6" stroke-linejoin="bevel">
<path d="M323 73L521 133L586 238L269 179Z"/>
</g>
<path d="M325 74L520 133" stroke="#222" stroke-width="1" stroke-dasharray="2 2"/>
<g fill="none" stroke="#ddd">
<path d="M10.500 275.500h7v7h-7zM14.500 251v32M10 279.500h37M14.500 241l-3 10h6zM54 279.500l-9-3v6z"/>
<path d="M615.500 197.500h4v4h-4z"/>
</g>
<path d="M627 203h3v6h4v2h-11v-2h4zM623 212h11v2h-12zM621 219l3-4h2l-2 4zM625 219l2-4h2l-1 4z" fill="#eee"/>
<g fill="#bcbcbc"><ellipse cx="800" cy="236" rx="6" ry="9"/><ellipse cx="817" cy="237" rx="7" ry="9"/><ellipse cx="893" cy="300" rx="5" ry="6"/></g>
<path d="M56 333l2-2 2 2M82 332h5" stroke="#777" fill="none"/>
</svg>
<span class="axis ax">X</span><span class="axis ay">Y</span>
<div class="tip"><span>选择目标对象或</span><svg viewBox="0 0 8 8"><path d="M0 0h8v8H0z" fill="#dfe8ff"/><path d="M4 1v4M2 3h4M1 6.500h6" stroke="#225"/></svg></div>
<div class="mark">
<svg viewBox="0 0 36 36" fill="none" stroke="#d5d8df" stroke-linejoin="round" stroke-linecap="round"><path d="M2 6v22q1 7 8 7 3 0 6-2l15-9q5-6 0-12L15 3Q7 0 7 6v19q0 4 4 4h2" stroke-width="3"/><path d="M14 13l8 5-8 4z" fill="#d5d8df" stroke="none"/><path d="M24 15v6" stroke-width="2"/></svg>
<div><strong>溜溜自学</strong><span>ZiXUe.3066.COM</span></div>
</div>
</div>
</div>
</section>

<aside class="col right">
<i class="grip"></i>
<div class="set"><button aria-label="命名视图"><svg><use href="#views"/></svg></button></div>
<i class="sep"></i>
<div class="set"><button aria-label="俯视"><svg><use href="#vtop"/></svg></button><button aria-label="仰视"><svg><use href="#vbot"/></svg></button><button aria-label="左视"><svg><use href="#vleft"/></svg></button><button aria-label="右视"><svg><use href="#vright"/></svg></button><button aria-label="前视"><svg><use href="#vfront"/></svg></button><button aria-label="后视"><svg><use href="#vback"/></svg></button></div>
<i class="sep"></i>
<div class="set"><button aria-label="西南等轴测"><svg><use href="#iso1"/></svg></button><button aria-label="东南等轴测"><svg><use href="#iso2"/></svg></button><button aria-label="东北等轴测"><svg><use href="#iso3"/></svg></button><button aria-label="西北等轴测"><svg><use href="#iso4"/></svg></button></div>
<i class="sep"></i>
<div class="set"><button aria-label="相机"><svg><use href="#cam"/></svg></button></div>
<i class="sep"></i>
<div class="set"><button aria-label="控制盘"><svg><use href="#wheel"/></svg></button></div>
<i class="sep"></i>
<i class="grip"></i>
<div class="set"><button aria-label="二维线框"><svg><use href="#wf2"/></svg></button></div>
<i class="sep"></i>
<div class="set"><button aria-label="三维线框"><svg><use href="#wf3"/></svg></button><button aria-label="三维隐藏"><svg><use href="#hid"/></svg></button><button aria-label="真实"><svg><use href="#real"/></svg></button><button aria-label="概念"><svg><use href="#conc"/></svg></button></div>
<i class="sep"></i>
<div class="set"><button aria-label="视觉样式管理"><svg><use href="#vsm"/></svg></button></div>
</aside>
<aside class="col edge">
<i class="grip"></i>
<div class="set"><button aria-label="删除"><svg><use href="#erase"/></svg></button><button aria-label="复制对象"><svg><use href="#copyo"/></svg></button><button aria-label="镜像"><svg><use href="#mirror"/></svg></button><button aria-label="偏移"><svg><use href="#offset"/></svg></button><button aria-label="阵列"><svg><use href="#array"/></svg></button></div>
<div class="set"><button aria-label="移动"><svg><use href="#move"/></svg></button><button aria-label="旋转对象"><svg><use href="#rot"/></svg></button><button aria-label="缩放"><svg><use href="#scale"/></svg></button><button aria-label="拉伸对象"><svg><use href="#stretch"/></svg></button><button aria-label="修剪"><svg><use href="#trim"/></svg></button></div>
<div class="set"><button aria-label="延伸"><svg><use href="#extend"/></svg></button><button aria-label="打断于点"><svg><use href="#brk"/></svg></button><button aria-label="打断"><svg><use href="#brk2"/></svg></button><button aria-label="合并"><svg><use href="#join"/></svg></button><button aria-label="倒角"><svg><use href="#fil"/></svg></button></div>
<div class="set"><button aria-label="圆角"><svg><use href="#fil"/></svg></button><button aria-label="分解"><svg><use href="#expl"/></svg></button></div>
<i class="sep"></i>
<i class="grip"></i>
<div class="set"><button aria-label="前置"><svg><use href="#ord1"/></svg></button><button aria-label="后置"><svg><use href="#ord2"/></svg></button><button aria-label="置于对象之上"><svg><use href="#ord3"/></svg></button><button aria-label="置于对象之下"><svg><use href="#ord1"/></svg></button></div>
</aside>
</main>
</body>
</html>
```

FILE: styles.css
```css
* { box-sizing: border-box; }
body {
  margin: 0;
  height: 100vh;
  display: flex;
  flex-direction: column;
  overflow: hidden;
  background: #efefef;
  font-family: "Open Sans", "Noto Sans CJK SC", sans-serif;
}
button {
  display: flex;
  align-items: center;
  justify-content: center;
  padding: 0;
  border: 0;
  background: none;
  font: inherit;
  color: inherit;
}
.sprite { position: absolute; width: 0; height: 0; }

.menu {
  display: flex;
  gap: 11px;
  height: 12px;
  padding-left: 5px;
  background: #f5f6f9;
  font-size: 9px;
  line-height: 11px;
  color: #111;
  white-space: nowrap;
}
.menu button { display: block; height: 11px; }

.row {
  display: flex;
  gap: 2px;
  height: 21px;
  padding-bottom: 1px;
}
.bar {
  display: flex;
  align-items: center;
  padding: 0 2px 0 3px;
  background: #f2f2f2;
  border-top: 1px solid #fff;
  border-right: 1px solid #a8a8a8;
  border-bottom: 1px solid #b8b8b8;
}
.bar .grip {
  width: 4px;
  height: 16px;
  margin-right: 2px;
  border-left: 1px solid #b8b8b8;
  border-right: 1px solid #b8b8b8;
  background: #fff;
}
.bar .sep {
  width: 1px;
  height: 16px;
  margin: 0 1px 0 2px;
  background: #a8a8a8;
}
.bar button { width: 17px; height: 17px; flex: none; }
.bar button svg { width: 15px; height: 15px; }
.bar .slim { width: 10px; }
.bar .slim svg { width: 8px; }

.combo {
  display: flex;
  align-items: center;
  height: 16px;
  padding-left: 3px;
  background: #efefef;
}
.combo select {
  flex: 1;
  min-width: 0;
  height: 16px;
  padding: 0;
  border: 0;
  appearance: none;
  background: none;
  color: #555;
  font: 9px/16px "Liberation Serif", "Noto Sans CJK SC", serif;
}
.combo .chev { width: 14px; height: 16px; background: #fcfcfc; flex: none; }
.combo .mini { width: 12px; height: 14px; flex: none; }
.rule { width: 44px; height: 1px; margin-right: 3px; background: #444; }
.rule.short { width: 26px; }
.w72 { width: 73px; }
.w86 { width: 86px; padding-left: 6px; }
.w92 { width: 93px; }
.w110 { width: 111px; }
.w116 { width: 117px; }
.w128 { width: 129px; padding-left: 6px; }
.w220 { width: 220px; }

.work {
  flex: 1;
  min-height: 0;
  display: flex;
}
.col {
  flex: none;
  width: 19px;
  padding: 1px 0 0;
  overflow: hidden;
  background: #f4f4f4;
  border-right: 1px solid #bdbdbd;
}
.col.ends { align-self: flex-start; padding-bottom: 5px; border-bottom: 1px solid #bdbdbd; }
.col .grip {
  display: block;
  height: 4px;
  margin: 1px 2px 1px 3px;
  border-top: 1px solid #bbb;
  border-bottom: 1px solid #bbb;
  background: #fff;
}
.col .sep {
  display: block;
  height: 1px;
  margin: 2px 2px 2px 3px;
  background: #c0b8b4;
}
.set { padding-bottom: 1px; }
.col button { width: 18px; height: 16px; }
.col svg { width: 14px; height: 14px; display: block; flex: none; }
.right { margin-left: 1px; }
.edge { width: 15px; border: 0; }
.edge button { width: 22px; }

.mdi {
  flex: 1;
  min-width: 0;
  display: flex;
  padding: 3px 0 0 2px;
  background: #8a8a8a;
}
.window {
  flex: 1;
  min-width: 0;
  display: flex;
  flex-direction: column;
  padding: 0 7px;
  border: 1px solid #3d4650;
  border-right-width: 2px;
  border-bottom: 0;
  border-radius: 5px 5px 0 0;
  background: linear-gradient(#9cb9d8, #b6cfe9 24px, #b7d0ea);
}
.title {
  display: flex;
  align-items: center;
  gap: 2px;
  height: 22px;
}
.title .app { width: 15px; height: 15px; }
.title h1 {
  flex: 1;
  margin: 0;
  text-align: center;
  font-size: 12px;
  line-height: 20px;
  font-weight: 400;
  color: #222;
}
.wb {
  width: 23px;
  height: 13px;
  border: 1px solid #6a83a0;
  border-radius: 2px;
  background: linear-gradient(#c9dcf0, #9db9d7);
}
.wb svg { width: 10px; height: 8px; }
.close { border-color: #7c2c22; background: linear-gradient(#e59a8c, #c5402c 50%, #d4604c); }
.canvas {
  position: relative;
  flex: 1;
  overflow: hidden;
  background: #000;
}
.draw { position: absolute; left: 0; top: 0; width: 100%; height: 100%; }
.axis { position: absolute; color: #ccc; font: 12px/14px "Liberation Sans", sans-serif; }
.ax { left: 59px; top: 273px; }
.ay { left: 12px; top: 224px; }
.tip {
  position: absolute;
  left: 629px;
  top: 212px;
  display: flex;
  align-items: center;
  justify-content: space-between;
  width: 88px;
  height: 16px;
  padding: 0 2px;
  border: 1px solid #7f7fb4;
  background: #15155c;
  color: #c9c9e8;
  font-size: 9px;
  line-height: 14px;
}
.tip svg { width: 8px; height: 8px; }
.mark {
  position: absolute;
  left: 717px;
  top: 237px;
  display: flex;
  align-items: center;
  gap: 12px;
  width: 180px;
  height: 85px;
  padding-left: 14px;
  background: #222f57;
  color: #d5d8df;
}
.mark svg { width: 36px; height: 36px; }
.mark strong {
  display: block;
  margin-bottom: 2px;
  font: 500 26px/28px "Liberation Sans", "Noto Sans CJK SC", sans-serif;
}
.mark span { display: block; font: 12px/14px "DejaVu Sans", sans-serif; }
```
